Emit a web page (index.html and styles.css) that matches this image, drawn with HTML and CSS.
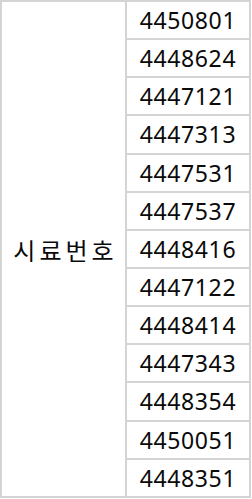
FILE: index.html
```html
<!DOCTYPE html>
<html lang="ko">
<head>
<meta charset="utf-8">
<link rel="stylesheet" href="styles.css">
</head>
<body>
<table class="grid">
  <tr><th class="label" rowspan="13">시료번호</th><td>4450801</td></tr>
  <tr><td>4448624</td></tr>
  <tr><td>4447121</td></tr>
  <tr><td>4447313</td></tr>
  <tr><td>4447531</td></tr>
  <tr><td>4447537</td></tr>
  <tr><td>4448416</td></tr>
  <tr><td>4447122</td></tr>
  <tr><td>4448414</td></tr>
  <tr><td>4447343</td></tr>
  <tr><td>4448354</td></tr>
  <tr><td>4450051</td></tr>
  <tr><td>4448351</td></tr>
</table>
</body>
</html>
```

FILE: styles.css
```css
html, body {
  margin: 0;
  padding: 0;
  background: #ffffff;
}
.grid {
  border-collapse: separate;
  border-spacing: 0;
  border: 1px solid #d4d4d4;
  width: 251px;
  height: 498px;
  font-family: "Noto Sans", "Noto Sans CJK KR", sans-serif;
  color: #0a0a0a;
}
.grid th, .grid td {
  border: 1px solid #d4d4d4;
  padding: 0;
  text-align: center;
  vertical-align: middle;
}
.label {
  width: 123px;
  font-weight: normal;
  font-size: 24px;
  letter-spacing: 4px;
  text-indent: 4px;
  padding-bottom: 4px;
  font-family: "Noto Sans CJK KR", sans-serif;
}
.grid td {
  height: 34px;
  font-size: 23px;
  letter-spacing: 0.6px;
}
```
